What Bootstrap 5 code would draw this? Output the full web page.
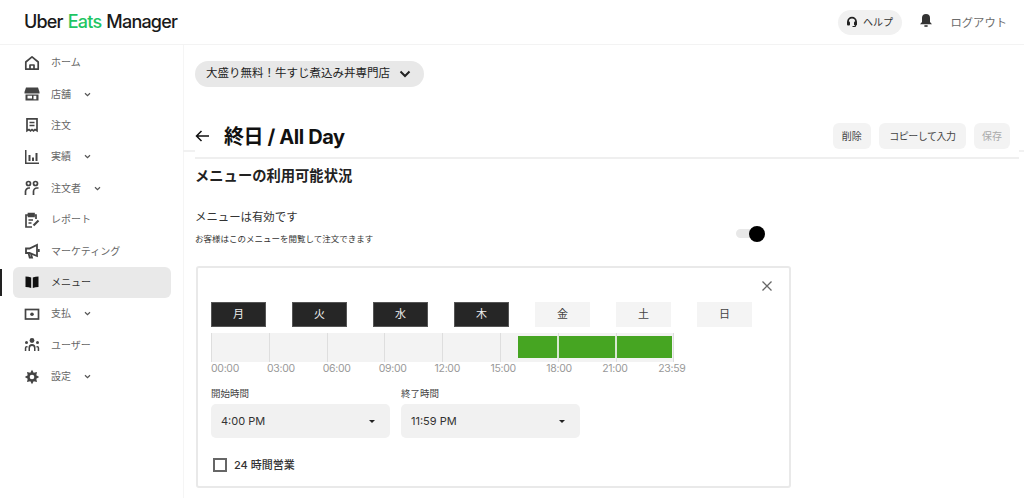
<!doctype html>
<html lang="ja">
<head>
<meta charset="utf-8">
<title>Uber Eats Manager</title>
<link href="https://cdn.jsdelivr.net/npm/bootstrap@5.3.0/dist/css/bootstrap.min.css" rel="stylesheet">
<style>
html,body{height:498px;overflow:hidden;background:#fff;}
body{font-family:Inter,"Noto Sans CJK JP",sans-serif;color:#222;}
.topbar{height:45px;border-bottom:1px solid #f3f3f3;padding:0 17px 0 24px;}
.brand{font-size:18px;font-weight:500;letter-spacing:-.8px;color:#1a1a1a;word-spacing:1px;margin-top:-1px;}
.brand b{font-weight:500;color:#1ec563;}
.help-pill{height:25px;width:64px;border-radius:13px;background:#f1f1f1;font-size:10px;color:#333;margin-right:18px;gap:5px;}
.bell{margin-top:-3px;}
.logout{font-size:11.3px;color:#6b6b6b;margin-left:19px;padding-top:2px;}
.side{width:184px;flex:none;border-right:1px solid #f5f5f5;height:453px;padding:2px 12px 0 13px;position:relative;}
.side-item{height:31.4px;font-size:10px;color:#666;padding-left:11px;}
.side-item svg.ic{width:16px;height:16px;margin-right:11px;flex:none;color:#444;}
.side-item .chev{width:7px;height:5px;margin-left:13px;color:#555;}
.side-item.on{background:#e9e9e9;border-radius:6px;color:#333;position:relative;}
.side-item.on svg.ic{color:#111;}
.side-item.on::before{content:"";position:absolute;left:-13px;top:2px;width:2px;height:27px;background:#222;}
.main-col{padding:16px 0 0 11px;min-width:0;flex:1;}
.store-pill{width:229px;height:26px;border-radius:13px;background:#e8e8e8;font-size:11.5px;color:#222;padding-left:11px;gap:9px;}
.title-row{margin-top:31px;height:36px;padding-right:14px;position:relative;}
.title-row::before{content:"";position:absolute;left:-12px;top:32px;width:12px;height:2px;background:#f1f1f1;}
.title-row::after{content:"";position:absolute;right:0;top:32px;width:5px;height:2px;background:#f1f1f1;}
.title-row h1{font-size:20px;font-weight:700;letter-spacing:-.4px;margin:1px 0 0 15px;color:#111;}
.act{height:26px;border-radius:6px;background:#f3f3f3;font-size:10px;color:#444;padding:0 9px;margin-left:8px;}
.act.copy{letter-spacing:-.5px;padding:0 10.5px;}
.act.off{color:#aaa;padding:0 8px;}
.rule{height:2px;background:#efefef;margin:3px 5px 0 0;}
.sec-h{font-size:14.3px;font-weight:700;margin:8px 0 0;color:#222;line-height:17px;}
.on-h{font-size:11.4px;margin:24px 0 0;line-height:18px;color:#333;}
.on-s{font-size:8.5px;margin:7px 0 0;line-height:12px;color:#333;}
.status-row{width:570px;}
.sw{width:29px;height:9px;border-radius:5px;background:#e8e8e8;position:relative;margin-top:38px;}
.sw::after{content:"";position:absolute;right:0;top:-3.5px;width:16px;height:16px;border-radius:50%;background:#000;}
.hours{width:595px;height:222px;border:2px solid #e9e9e9;border-radius:3px;margin:21px 0 0 1px;padding:34px 13px 0;position:relative;}
.x-btn{position:absolute;right:16px;top:12px;width:12px;height:12px;color:#666;}
.day{width:55px;height:25px;background:#f4f4f4;font-size:11px;color:#444;}
.day.sel{background:#262626;color:#eee;border:1px solid #555;}
.days{gap:26px;}
.track{width:463px;height:29px;background:#f3f3f3;margin-top:6px;position:relative;}
.tick{width:57.8px;height:29px;border-left:1.5px solid #dedede;flex:none;}
.tick.end{width:1px;}
.fill{position:absolute;left:307px;top:3px;width:154px;height:22px;background:#46a522;}
.fill i{position:absolute;top:0;bottom:0;width:1.5px;background:#d8e8d0;}
.labels{font-size:10.5px;color:#999;margin-top:0;line-height:13px;letter-spacing:-.3px;}
.labels span{width:55.9px;flex:none;}
.f-lab{font-size:9.5px;color:#444;line-height:12px;margin:13px 0 4px;}
.sel-box{width:179px;height:34px;background:#f1f1f1;border-radius:5px;font-size:11px;padding:0 10px;color:#333;}
.caret-d{width:0;height:0;border-left:3.5px solid transparent;border-right:3.5px solid transparent;border-top:3.5px solid #222;margin-right:5px;}
.times{gap:11px;}
.chk{width:14px;height:14px;border:2px solid #666;margin:0 7px 0 2px;}
.chk-row{margin-top:19px;font-size:11px;font-weight:500;color:#333;}
</style>
</head>
<body>
<header class="topbar d-flex align-items-center">
  <div class="brand">Uber <b>Eats</b> Manager</div>
  <div class="ms-auto d-flex align-items-center">
    <div class="help-pill d-flex align-items-center justify-content-center">
      <svg width="12" height="12" viewBox="0 0 12 12"><path d="M2 7V5.600a4 4 0 0 1 8 0V7" fill="none" stroke="#222" stroke-width="1.800"/><rect x="1" y="5.500" width="3" height="4" rx="1" fill="#222"/><rect x="8" y="5.500" width="3" height="4" rx="1" fill="#222"/><path d="M9.500 9v1.500H6.500" fill="none" stroke="#222" stroke-width="1"/></svg>
      <span>ヘルプ</span>
    </div>
    <svg class="bell" width="12" height="15" viewBox="0 0 12 15"><path d="M6 1a4 4 0 0 1 4 4v4l2 2.200H0L2 9V5a4 4 0 0 1 4-4z" fill="#333"/><rect x="4.400" y="12.200" width="3.200" height="1.600" fill="#333"/></svg>
    <span class="logout">ログアウト</span>
  </div>
</header>
<div class="d-flex">
  <nav class="side">
    <div class="side-item d-flex align-items-center"><svg class="ic" viewBox="0 0 16 16" fill="none" stroke="currentColor" stroke-width="1.700" stroke-linejoin="round"><path d="M1.800 7 8 1.800 14.200 7v7.200H1.800z"/><path d="M6 14.200V10h4v4.200"/></svg>ホーム</div>
    <div class="side-item d-flex align-items-center"><svg class="ic" viewBox="0 0 16 16" fill="currentColor"><path d="M2 1.500h12L15.500 6v1.500H.5V6z"/><path fill-rule="evenodd" d="M1.500 8.500h13v6h-13zM3.500 9.800v2.700h4.500V9.800zm6 0v3.500h2.800V9.800z"/></svg>店舗<svg class="chev" viewBox="0 0 8 6" fill="none" stroke="currentColor" stroke-width="1.500"><path d="M1 1.500 4 4.300 7 1.500"/></svg></div>
    <div class="side-item d-flex align-items-center"><svg class="ic" viewBox="0 0 16 16" fill="none" stroke="currentColor" stroke-width="1.700"><path d="M3 1.800h10v12l-2-1.300-1.500 1.300L8 12.500l-1.500 1.300L5 12.500l-2 1.300z"/><path d="M5.500 5.500h5M5.500 8.500h5"/></svg>注文</div>
    <div class="side-item d-flex align-items-center"><svg class="ic" viewBox="0 0 16 16" fill="currentColor"><path d="M1 1h1.500v12.500H15V15H1z"/><rect x="4.500" y="6" width="2" height="6"/><rect x="8" y="8.500" width="2" height="3.500"/><rect x="11.500" y="4" width="2" height="8"/></svg>実績<svg class="chev" viewBox="0 0 8 6" fill="none" stroke="currentColor" stroke-width="1.500"><path d="M1 1.500 4 4.300 7 1.500"/></svg></div>
    <div class="side-item d-flex align-items-center"><svg class="ic" viewBox="0 0 16 16" fill="none" stroke="currentColor" stroke-width="1.700"><circle cx="4.500" cy="3.500" r="2"/><circle cx="11.500" cy="3.500" r="2"/><path d="M1.500 15v-3.500a3.500 3.500 0 0 1 3.500-3.500h1M9.500 15v-3.500A3.500 3.500 0 0 1 13 8h1.500"/></svg>注文者<svg class="chev" viewBox="0 0 8 6" fill="none" stroke="currentColor" stroke-width="1.500"><path d="M1 1.500 4 4.300 7 1.500"/></svg></div>
    <div class="side-item d-flex align-items-center"><svg class="ic" viewBox="0 0 16 16" fill="none" stroke="currentColor" stroke-width="1.700"><path d="M10.500 3H12v4M5 3H2v12h6"/><path d="M4.500 1.500h5.500v3H4.500z" fill="currentColor"/><path d="M4.500 8h4.500M4.500 11h3"/><path d="m9.500 13.500 5-5" stroke-width="2.200"/></svg>レポート</div>
    <div class="side-item d-flex align-items-center"><svg class="ic" viewBox="0 0 16 16" fill="none" stroke="currentColor" stroke-width="1.800"><path d="M13 2v11L5.500 10H2V5.500h3.500z"/><path d="M4.500 10l1.200 4.500H8L7 11"/><path d="M14.800 6v3"/></svg>マーケティング</div>
    <div class="side-item on d-flex align-items-center"><svg class="ic" viewBox="0 0 16 16" fill="currentColor"><path d="M1.500 2.500c2 0 4 .3 5.700 1V14c-1.700-.7-3.700-1-5.700-1zM14.500 2.500c-2 0-4 .3-5.700 1V14c1.700-.7 3.700-1 5.700-1z"/></svg>メニュー</div>
    <div class="side-item d-flex align-items-center"><svg class="ic" viewBox="0 0 16 16" fill="none" stroke="currentColor" stroke-width="1.700"><rect x="1.500" y="3.500" width="13" height="9.500"/><circle cx="8" cy="8.300" r="1.800" fill="currentColor" stroke="none"/></svg>支払<svg class="chev" viewBox="0 0 8 6" fill="none" stroke="currentColor" stroke-width="1.500"><path d="M1 1.500 4 4.300 7 1.500"/></svg></div>
    <div class="side-item d-flex align-items-center"><svg class="ic" viewBox="0 0 16 16" fill="currentColor"><circle cx="8" cy="3.500" r="2.400"/><circle cx="2.500" cy="5.500" r="1.500"/><circle cx="13.500" cy="5.500" r="1.500"/><path d="M4.500 14V10.500A3.500 3.500 0 0 1 8 7a3.500 3.500 0 0 1 3.500 3.500V14H10v-3a2 2 0 0 0-4 0v3z"/><path d="M.8 14v-3a2 2 0 0 1 2-2H3.500v1.500H2.300V14zM15.200 14v-3a2 2 0 0 0-2-2h-.7v1.500h1.200V14z"/></svg>ユーザー</div>
    <div class="side-item d-flex align-items-center"><svg class="ic" viewBox="0 0 16 16" fill="none" stroke="currentColor"><path d="M8 .8 9.700 3.700 13 2.900 12.300 6.300 15.200 8 12.300 9.700 13 13.100 9.700 12.300 8 15.200 6.300 12.300 3 13.100 3.700 9.700.8 8 3.700 6.300 3 2.900 6.300 3.700z" fill="currentColor" stroke="none"/><circle cx="8" cy="8" r="2.300" fill="#fff" stroke="none"/></svg>設定<svg class="chev" viewBox="0 0 8 6" fill="none" stroke="currentColor" stroke-width="1.500"><path d="M1 1.500 4 4.300 7 1.500"/></svg></div>
  </nav>
  <main class="main-col">
    <div class="store-pill d-flex align-items-center">大盛り無料！牛すじ煮込み丼専門店
      <svg width="12" height="8" viewBox="0 0 12 8" fill="none" stroke="#222" stroke-width="2"><path d="M1.500 1.500 6 6l4.500-4.500"/></svg>
    </div>
    <div class="title-row d-flex align-items-center">
      <svg width="14" height="12" viewBox="0 0 14 12" fill="none" stroke="#111" stroke-width="1.500"><path d="M14 6H1.500M6.500 1 1.500 6l5 5"/></svg>
      <h1>終日 / All Day</h1>
      <div class="ms-auto d-flex">
        <div class="act d-flex align-items-center">削除</div>
        <div class="act copy d-flex align-items-center">コピーして入力</div>
        <div class="act off d-flex align-items-center">保存</div>
      </div>
    </div>
    <div class="rule"></div>
    <h2 class="sec-h">メニューの利用可能状況</h2>
    <div class="status-row d-flex justify-content-between align-items-center">
      <div>
        <p class="on-h">メニューは有効です</p>
        <p class="on-s">お客様はこのメニューを閲覧して注文できます</p>
      </div>
      <div class="sw"></div>
    </div>
    <section class="hours">
      <svg class="x-btn" viewBox="0 0 12 12" fill="none" stroke="currentColor" stroke-width="1.300"><path d="M1.500 1.500l9 9M10.500 1.500l-9 9"/></svg>
      <div class="days d-flex">
        <div class="day sel d-flex align-items-center justify-content-center">月</div>
        <div class="day sel d-flex align-items-center justify-content-center">火</div>
        <div class="day sel d-flex align-items-center justify-content-center">水</div>
        <div class="day sel d-flex align-items-center justify-content-center">木</div>
        <div class="day d-flex align-items-center justify-content-center">金</div>
        <div class="day d-flex align-items-center justify-content-center">土</div>
        <div class="day d-flex align-items-center justify-content-center">日</div>
      </div>
      <div class="track d-flex">
        <span class="tick"></span><span class="tick"></span><span class="tick"></span><span class="tick"></span><span class="tick"></span><span class="tick"></span><span class="tick"></span><span class="tick"></span><span class="tick end"></span>
        <div class="fill"><i style="left:39px"></i><i style="left:97px"></i></div>
      </div>
      <div class="labels d-flex"><span>00:00</span><span>03:00</span><span>06:00</span><span>09:00</span><span>12:00</span><span>15:00</span><span>18:00</span><span>21:00</span><span>23:59</span></div>
      <div class="times d-flex">
        <div>
          <div class="f-lab">開始時間</div>
          <div class="sel-box d-flex align-items-center justify-content-between">4:00 PM<span class="caret-d"></span></div>
        </div>
        <div>
          <div class="f-lab">終了時間</div>
          <div class="sel-box d-flex align-items-center justify-content-between">11:59 PM<span class="caret-d"></span></div>
        </div>
      </div>
      <div class="chk-row d-flex align-items-center"><span class="chk"></span>24 時間営業</div>
    </section>
  </main>
</div>
<script src="https://cdn.jsdelivr.net/npm/bootstrap@5.3.0/dist/js/bootstrap.bundle.min.js"></script>
</body>
</html>
